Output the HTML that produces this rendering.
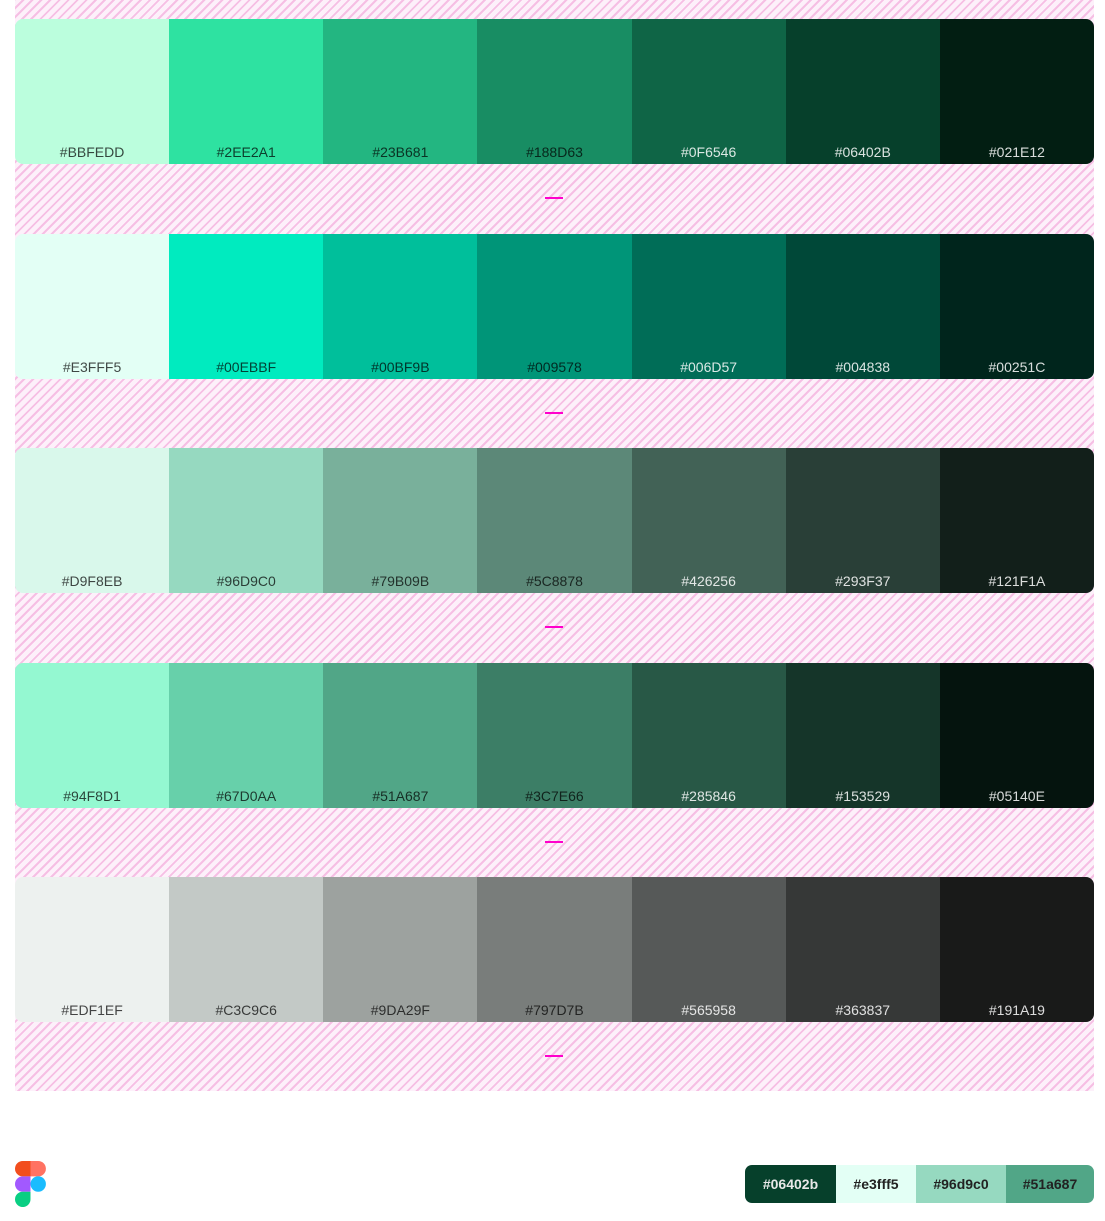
<!DOCTYPE html>
<html><head><style>
*{margin:0;padding:0;box-sizing:border-box}
body{width:1105px;height:1221px;background:#fff;position:relative;overflow:hidden;font-family:"Liberation Sans",sans-serif}
.hatch{position:absolute;left:15px;top:0;width:1079px;height:1091px;background:#fdf0fa repeating-linear-gradient(-45deg,#fdf0fa 0 4.4px,#f6bfe4 4.4px 6.4px)}
.row{position:absolute;left:15px;width:1079px;height:145px;display:flex;border-radius:8px;overflow:hidden}
.row div{flex:1;position:relative;font-size:14px}
.row div span{position:absolute;left:0;right:0;bottom:4px;text-align:center}
.d span{color:rgba(0,0,0,.72)}
.l span{color:rgba(255,255,255,.85)}
.dash{position:absolute;left:545px;width:18px;height:2px;background:#f0c}
.leg{position:absolute;left:745px;top:1165px;height:38px;width:349px;display:flex;border-radius:7px;overflow:hidden;font-size:14px;font-weight:bold}
.leg div{display:flex;align-items:center;justify-content:center}
</style></head><body>
<div class="hatch"></div>
<div class="row" style="top:19px">
<div class="d" style="background:#BBFEDD"><span>#BBFEDD</span></div>
<div class="d" style="background:#2EE2A1"><span>#2EE2A1</span></div>
<div class="d" style="background:#23B681"><span>#23B681</span></div>
<div class="d" style="background:#188D63"><span>#188D63</span></div>
<div class="l" style="background:#0F6546"><span>#0F6546</span></div>
<div class="l" style="background:#06402B"><span>#06402B</span></div>
<div class="l" style="background:#021E12"><span>#021E12</span></div>
</div>
<div class="dash" style="top:197px"></div>
<div class="row" style="top:233.5px">
<div class="d" style="background:#E3FFF5"><span>#E3FFF5</span></div>
<div class="d" style="background:#00EBBF"><span>#00EBBF</span></div>
<div class="d" style="background:#00BF9B"><span>#00BF9B</span></div>
<div class="d" style="background:#009578"><span>#009578</span></div>
<div class="l" style="background:#006D57"><span>#006D57</span></div>
<div class="l" style="background:#004838"><span>#004838</span></div>
<div class="l" style="background:#00251C"><span>#00251C</span></div>
</div>
<div class="dash" style="top:411.5px"></div>
<div class="row" style="top:448px">
<div class="d" style="background:#D9F8EB"><span>#D9F8EB</span></div>
<div class="d" style="background:#96D9C0"><span>#96D9C0</span></div>
<div class="d" style="background:#79B09B"><span>#79B09B</span></div>
<div class="d" style="background:#5C8878"><span>#5C8878</span></div>
<div class="l" style="background:#426256"><span>#426256</span></div>
<div class="l" style="background:#293F37"><span>#293F37</span></div>
<div class="l" style="background:#121F1A"><span>#121F1A</span></div>
</div>
<div class="dash" style="top:626px"></div>
<div class="row" style="top:662.5px">
<div class="d" style="background:#94F8D1"><span>#94F8D1</span></div>
<div class="d" style="background:#67D0AA"><span>#67D0AA</span></div>
<div class="d" style="background:#51A687"><span>#51A687</span></div>
<div class="d" style="background:#3C7E66"><span>#3C7E66</span></div>
<div class="l" style="background:#285846"><span>#285846</span></div>
<div class="l" style="background:#153529"><span>#153529</span></div>
<div class="l" style="background:#05140E"><span>#05140E</span></div>
</div>
<div class="dash" style="top:840.5px"></div>
<div class="row" style="top:877px">
<div class="d" style="background:#EDF1EF"><span>#EDF1EF</span></div>
<div class="d" style="background:#C3C9C6"><span>#C3C9C6</span></div>
<div class="d" style="background:#9DA29F"><span>#9DA29F</span></div>
<div class="d" style="background:#797D7B"><span>#797D7B</span></div>
<div class="l" style="background:#565958"><span>#565958</span></div>
<div class="l" style="background:#363837"><span>#363837</span></div>
<div class="l" style="background:#191A19"><span>#191A19</span></div>
</div>
<div class="dash" style="top:1055px"></div>
<svg style="position:absolute;left:15px;top:1161px" width="32" height="46" viewBox="0 0 32 46">
<path d="M0 7.7A7.7 7.7 0 0 1 7.7 0H15.5V15.4H7.7A7.7 7.7 0 0 1 0 7.7Z" fill="#F24E1E"/>
<path d="M15.5 0H23.2A7.7 7.7 0 0 1 23.2 15.4H15.5Z" fill="#FF7262"/>
<path d="M0 23A7.7 7.7 0 0 1 7.7 15.4H15.5V30.7H7.7A7.7 7.7 0 0 1 0 23Z" fill="#A259FF"/>
<circle cx="23.2" cy="23" r="7.7" fill="#1ABCFE"/>
<path d="M0 38.3A7.7 7.7 0 0 1 7.7 30.7H15.5V38.3A7.7 7.7 0 0 1 0 38.3Z" fill="#0ACF83"/>
</svg>
<div class="leg">
<div style="width:91px;background:#06402b;color:#e8e8e8">#06402b</div>
<div style="width:80px;background:#e3fff5;color:#222">#e3fff5</div>
<div style="width:90px;background:#96d9c0;color:#222">#96d9c0</div>
<div style="width:88px;background:#51a687;color:#222">#51a687</div>
</div>
</body></html>
